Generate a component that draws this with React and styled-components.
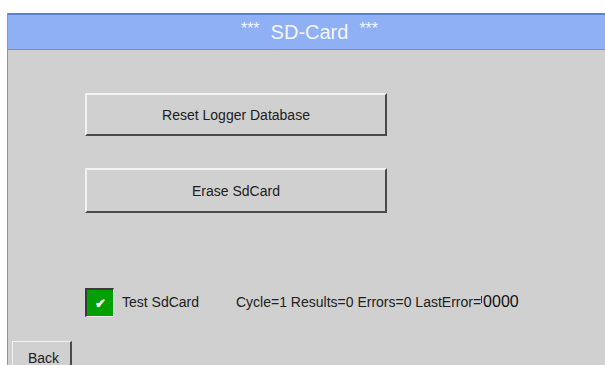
import styled, { createGlobalStyle } from "styled-components";

const Global = createGlobalStyle`
  html, body {
    margin: 0;
    padding: 0;
    background: #ffffff;
    font-family: "Liberation Sans", Arial, sans-serif;
  }
`;

const Screen = styled.div`
  width: 605px;
  height: 365px;
  padding: 13px 0 0 7px;
  box-sizing: border-box;
  overflow: hidden;
`;

const Frame = styled.div`
  height: 352px;
  border-left: 1px solid #6e9fcc;
  display: flex;
  flex-direction: column;
`;

const Header = styled.div`
  height: 34px;
  flex: none;
  background: #8fb0f5;
  border-top: 2px solid #5d80d6;
  border-bottom: 1px solid #8791a6;
  display: flex;
  align-items: center;
  justify-content: center;
  gap: 11px;
  color: #f4f6ff;
  padding-left: 6px;
`;

const Stars = styled.span`
  font-size: 16px;
  position: relative;
  top: -3px;
`;

const Title = styled.span`
  font-size: 20px;
`;

const Body = styled.div`
  flex: 1;
  display: flex;
  flex-direction: column;
  padding: 43px 0 0 77px;
`;

const ActionButton = styled.div`
  width: 302px;
  height: ${(p) => p.$h}px;
  box-sizing: border-box;
  border-top: 2px solid #f2f2f2;
  border-left: 2px solid #f2f2f2;
  border-right: 2px solid #4a4a4a;
  border-bottom: 2px solid #4a4a4a;
  display: flex;
  align-items: center;
  justify-content: center;
  font-size: 14px;
  color: #202020;
  margin-bottom: ${(p) => p.$mb}px;
`;

const TestRow = styled.div`
  display: flex;
  align-items: center;
  height: 30px;
  margin-top: 74px;
`;

const Check = styled.div`
  width: 29px;
  height: 29px;
  box-sizing: border-box;
  background: #00a000;
  border-top: 2px solid #3a3a3a;
  border-left: 2px solid #3a3a3a;
  border-right: 1px solid #e8e8e8;
  border-bottom: 1px solid #e8e8e8;
  display: flex;
  align-items: center;
  justify-content: center;
  color: #ffffff;
  font-size: 13px;
  font-weight: bold;
  padding-top: 2px;
`;

const Label = styled.span`
  font-size: 14px;
  color: #202020;
  margin-left: 8px;
  width: 114px;
`;

const Status = styled.span`
  font-size: 14px;
  color: #202020;
`;

const Tick = styled.span`
  display: inline-block;
  width: 1px;
  height: 7px;
  background: #303030;
  margin: 0 1px 0 0;
  position: relative;
  top: -3px;
`;

const Code = styled.span`
  font-size: 16px;
  color: #101010;
`;

const Footer = styled.div`
  margin-top: auto;
  display: flex;
`;

const BackButton = styled.div`
  margin-left: 4px;
  width: 60px;
  height: 24px;
  box-sizing: border-box;
  border-top: 1px solid #f2f2f2;
  border-left: 1px solid #f2f2f2;
  border-right: 2px solid #4a4a4a;
  font-size: 14px;
  color: #202020;
  padding: 8px 0 0 15px;
`;

const BodyWrap = styled.div`
  flex: 1;
  display: flex;
  flex-direction: column;
  background: #d0d0d0;
`;

export default function App() {
  return (
    <Screen>
      <Global />
      <Frame>
        <Header>
          <Stars>***</Stars>
          <Title>SD-Card</Title>
          <Stars>***</Stars>
        </Header>
        <BodyWrap>
          <Body>
            <ActionButton $h={43} $mb={32}>Reset Logger Database</ActionButton>
            <ActionButton $h={45} $mb={0}>Erase SdCard</ActionButton>
            <TestRow>
              <Check>✔</Check>
              <Label>Test SdCard</Label>
              <Status>Cycle=1 Results=0 Errors=0 LastError=</Status>
              <Tick />
              <Code>0000</Code>
            </TestRow>
          </Body>
          <Footer>
            <BackButton>Back</BackButton>
          </Footer>
        </BodyWrap>
      </Frame>
    </Screen>
  );
}
